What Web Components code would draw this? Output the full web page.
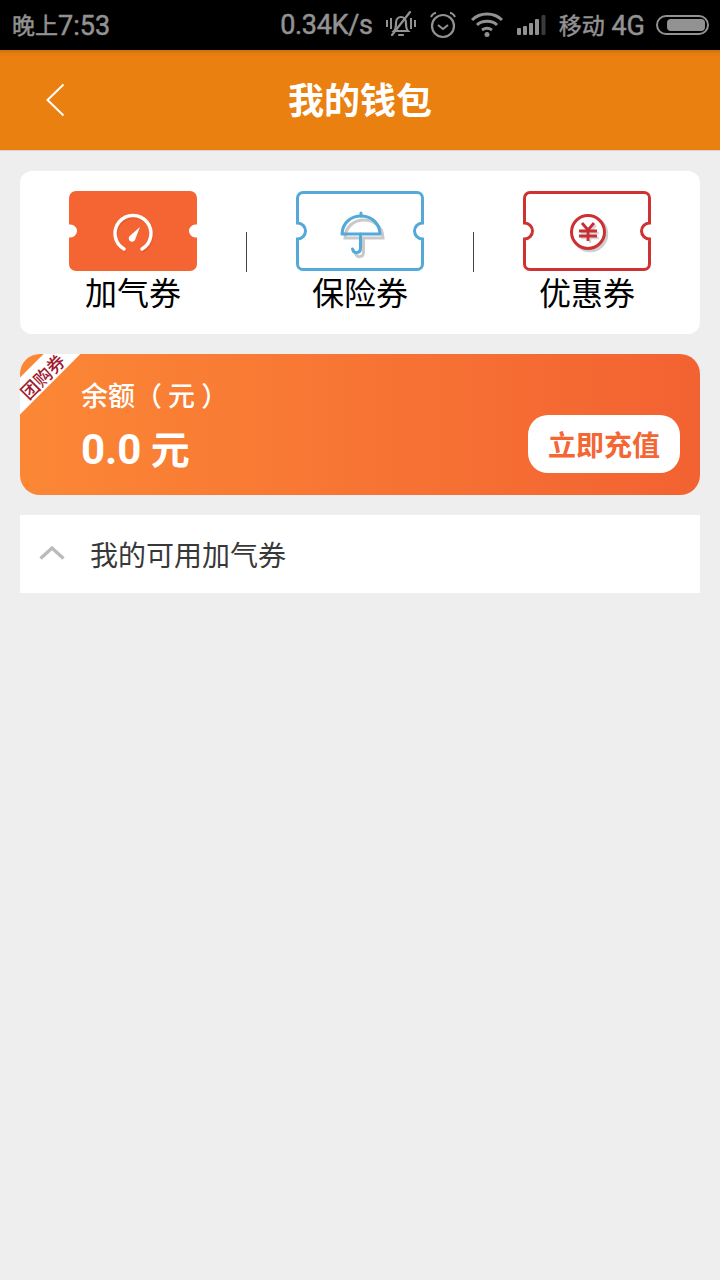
<!DOCTYPE html>
<html lang="zh-CN">
<head>
<meta charset="utf-8">
<title>我的钱包</title>
<style>
  html, body { margin: 0; padding: 0; }
  body {
    width: 720px;
    height: 1280px;
    overflow: hidden;
    background: #eeeeee;
    font-family: Roboto, "Noto Sans CJK SC", sans-serif;
  }
  wallet-page { height: 1280px; }
</style>
</head>
<body>
<wallet-page>
  <status-bar slot="top"></status-bar>
  <title-bar slot="top">我的钱包</title-bar>
  <ticket-tabs>
    <ticket-tab kind="gas">加气券</ticket-tab>
    <ticket-tab kind="insurance">保险券</ticket-tab>
    <ticket-tab kind="discount">优惠券</ticket-tab>
  </ticket-tabs>
  <balance-card>
    <span slot="ribbon">团购券</span>
    <span slot="label">余额（ 元 ）</span>
    <span slot="amount">0.0</span>
    <span slot="unit">元</span>
    <span slot="action">立即充值</span>
  </balance-card>
  <fold-row>我的可用加气券</fold-row>
</wallet-page>

<script>
class WalletPage extends HTMLElement {
  constructor() {
    super();
    const shadow = this.attachShadow({ mode: 'open' });
    shadow.innerHTML = `
      <style>
        :host { display: flex; flex-direction: column; }
        main {
          display: flex;
          flex-direction: column;
          gap: 20px;
          padding: 20px;
        }
      </style>
      <slot name="top"></slot>
      <main><slot></slot></main>
    `;
  }
}

class StatusBar extends HTMLElement {
  constructor() {
    super();
    const shadow = this.attachShadow({ mode: 'open' });
    shadow.innerHTML = `
      <style>
        :host {
          display: flex;
          align-items: center;
          height: 50px;
          padding: 0 11px 0 12px;
          box-sizing: border-box;
          background: #000;
          color: #929292;
          font: 400 27px/50px Roboto, "Noto Sans CJK SC", sans-serif;
          -webkit-text-stroke: 0.5px #929292;
        }
        .time { flex: 1; }
        .net { margin-right: 13px; letter-spacing: -0.3px; }
        .carrier { margin: 0 11px 0 13px; }
        .cjk {
          font-size: 23px;
          font-family: "Noto Sans CJK SC", sans-serif;
          position: relative;
          top: -1px;
        }
        svg { display: block; fill: none; stroke: #929292; }
      </style>
      <span class="time"><span class="cjk">晚上</span>7:53</span>
      <span class="net">0.34K/s</span>
      <svg width="30" height="28" viewBox="0 0 30 28" stroke-width="2.2" style="margin-right:14px">
        <path d="M1 9v7M5 7v11M25 7v11M29 9v7" stroke-width="2"/>
        <path d="M8 20c2-2 2-4 2-8 0-4 2.500-6 5-6s5 2 5 6c0 4 0 6 2 8z"/>
        <path d="M13 24h4M24 1 6 24" stroke-linecap="round"/>
      </svg>
      <svg width="26" height="28" viewBox="0 0 26 28" stroke-width="2.2" style="margin-right:15px">
        <circle cx="13" cy="15" r="11"/>
        <path d="M8 14l5 4 5-4" stroke-width="2"/>
        <path d="M1 6c1-2 3-4 5-4M25 6c-1-2-3-4-5-4" stroke-width="2"/>
      </svg>
      <svg width="32" height="26" viewBox="0 0 32 26" stroke-width="3" style="margin-right:14px">
        <path d="M1 8c8-8 22-8 30 0M6 13c5-5 15-5 20 0M11 18c3-2 7-2 10 0"/>
        <circle cx="16" cy="22.500" r="2.500" fill="#929292" stroke="none"/>
      </svg>
      <svg width="29" height="24" viewBox="0 0 29 24" style="stroke:none">
        <rect x="0" y="15" width="4" height="7" rx="1" fill="#929292"/>
        <rect x="6" y="13" width="4" height="9" rx="1" fill="#929292"/>
        <rect x="12" y="10" width="4" height="12" rx="1" fill="#929292"/>
        <rect x="18" y="6" width="4" height="16" rx="1" fill="#929292"/>
        <rect x="24.500" y="2" width="4" height="20" rx="1" fill="#3a3a3a"/>
      </svg>
      <span class="carrier"><span class="cjk">移动</span> 4G</span>
      <svg width="53" height="20" viewBox="0 0 53 20" stroke-width="2">
        <rect x="1" y="1" width="51" height="18" rx="9"/>
        <rect x="11" y="4" width="38" height="12" rx="4" fill="#929292" stroke="none"/>
      </svg>
    `;
  }
}

class TitleBar extends HTMLElement {
  constructor() {
    super();
    const shadow = this.attachShadow({ mode: 'open' });
    shadow.innerHTML = `
      <style>
        :host {
          display: flex;
          align-items: center;
          justify-content: center;
          position: relative;
          height: 101px;
          padding-bottom: 5px;
          box-sizing: border-box;
          background: linear-gradient(#c96e0e, #e27c10 3px, #ea8010 7px);
          border-bottom: 1px solid #d3d3d3;
          color: #fff;
          font: 700 36px "Noto Sans CJK SC", sans-serif;
        }
        svg { position: absolute; left: 46px; top: 33px; }
      </style>
      <svg width="20" height="34" viewBox="0 0 20 34" fill="none" stroke="#fff" stroke-width="2">
        <path d="M17.500 1.500 1.500 17l16 15.500"/>
      </svg>
      <slot></slot>
    `;
  }
}

class TicketTabs extends HTMLElement {
  constructor() {
    super();
    const shadow = this.attachShadow({ mode: 'open' });
    shadow.innerHTML = `
      <style>
        :host {
          display: grid;
          grid-template-columns: repeat(3, 227px);
          justify-content: center;
          height: 163px;
          box-sizing: border-box;
          background: #fff;
          border-radius: 12px;
        }
      </style>
      <slot></slot>
    `;
  }
}

const TICKET_ICONS = {
  gas: `
    <path d="M55 58a18 18 0 1 1 18 0" fill="none" stroke="#d9502a" stroke-width="3" stroke-linecap="round" transform="translate(1 2)" opacity=".5"/>
    <path d="M55 58a18 18 0 1 1 18 0" fill="none" stroke="#fff" stroke-width="3.500" stroke-linecap="round"/>
    <path d="M71 36 66.500 47.500a3.400 3.400 0 1 1-5-3.200z" fill="#fff"/>`,
  insurance: `
    <g fill="none" stroke="#c9c9c9" stroke-width="3" transform="translate(3 4)">
      <path d="M46 43C47 19 83 19 84 43z"/><path d="M64.500 43v14c0 6-7 6-8 1"/>
    </g>
    <g fill="none" stroke="#55a8da" stroke-width="3" stroke-linecap="round" stroke-linejoin="round">
      <path d="M46 43C47 19 83 19 84 43z"/><path d="M64.500 43v14c0 6-7 6-8 1"/><path d="M65 25v-3"/>
    </g>`,
  discount: `
    <circle cx="67" cy="43" r="16.500" fill="none" stroke="#cfcfcf" stroke-width="3.500"/>
    <circle cx="65" cy="41" r="16.500" fill="#fff" stroke="#cc3033" stroke-width="3"/>
    <g fill="none" stroke="#d8d8d8" stroke-width="2.500" transform="translate(2 2)">
      <path d="M59 32l6 7 6-7M56 40h18M56 45h18M65 39v11"/>
    </g>
    <g fill="none" stroke="#c62f33" stroke-width="2.800">
      <path d="M59 32l6 7 6-7M56 40h18M56 45h18M65 39v11"/>
    </g>`
};

// ticket outline with a half round bite on both short sides
const TICKET_PATH = 'M7 1.500H121a5.500 5.500 0 0 1 5.500 5.500V32a8 8 0 0 0 0 16V73a5.500 5.500 0 0 1-5.500 5.500H7A5.500 5.500 0 0 1 1.500 73V48a8 8 0 0 0 0-16V7A5.500 5.500 0 0 1 7 1.500z';

class TicketTab extends HTMLElement {
  constructor() {
    super();
    this.attachShadow({ mode: 'open' });
  }

  connectedCallback() {
    const kind = this.getAttribute('kind');
    const styles = {
      gas: 'fill="#f56433" stroke="#f56433"',
      insurance: 'fill="#fff" stroke="#55a8da"',
      discount: 'fill="#fff" stroke="#ce3232"'
    };
    this.shadowRoot.innerHTML = `
      <style>
        :host {
          display: flex;
          flex-direction: column;
          align-items: center;
          position: relative;
          padding-top: 20px;
          color: #000;
          font: 32px/40px "Noto Sans CJK SC", sans-serif;
        }
        :host(:not(:last-child))::after {
          content: '';
          position: absolute;
          right: 0;
          top: 61px;
          width: 1px;
          height: 40px;
          background: #444;
        }
        svg { display: block; }
      </style>
      <svg width="128" height="80" viewBox="0 0 128 80" stroke-width="3">
        <path d="${TICKET_PATH}" ${styles[kind]}/>
        ${TICKET_ICONS[kind]}
      </svg>
      <slot></slot>
    `;
  }
}

class BalanceCard extends HTMLElement {
  constructor() {
    super();
    const shadow = this.attachShadow({ mode: 'open' });
    shadow.innerHTML = `
      <style>
        :host {
          display: flex;
          align-items: flex-end;
          justify-content: space-between;
          position: relative;
          height: 141px;
          padding: 0 20px 22px 61px;
          box-sizing: border-box;
          border-radius: 20px;
          background: linear-gradient(90deg, #fb8735, #f36232);
          color: #fff;
        }
        .corner {
          position: absolute;
          inset: 0;
          overflow: hidden;
          border-radius: inherit;
        }
        .band {
          position: absolute;
          left: -44px;
          top: 8px;
          width: 130px;
          height: 26px;
          transform: rotate(-45deg);
          background: #fff;
        }
        .ribbon {
          position: absolute;
          left: -23px;
          top: 9px;
          width: 90px;
          transform: rotate(-45deg);
          color: #a01b2e;
          text-align: center;
          font: 500 18px/26px "Noto Sans CJK SC", sans-serif;
        }
        .info { display: flex; flex-direction: column; margin-bottom: -8px; position: relative; }
        .label { font: 500 27px/40px "Noto Sans CJK SC", sans-serif; margin-bottom: 5px; }
        .amount { font: 700 42px/60px Roboto, "Noto Sans CJK SC", sans-serif; word-spacing: -1px; }
        .amount .unit { font-size: 39px; }
        .action {
          display: flex;
          align-items: center;
          justify-content: center;
          position: relative;
          width: 152px;
          height: 58px;
          border-radius: 20px;
          background: #fff;
          color: #f46634;
          font: 700 28px "Noto Sans CJK SC", sans-serif;
        }
      </style>
      <div class="corner"><div class="band"></div></div>
      <div class="ribbon"><slot name="ribbon"></slot></div>
      <div class="info">
        <span class="label"><slot name="label"></slot></span>
        <span class="amount"><slot name="amount"></slot> <span class="unit"><slot name="unit"></slot></span></span>
      </div>
      <div class="action"><slot name="action"></slot></div>
    `;
  }
}

class FoldRow extends HTMLElement {
  constructor() {
    super();
    const shadow = this.attachShadow({ mode: 'open' });
    shadow.innerHTML = `
      <style>
        :host {
          display: flex;
          align-items: center;
          gap: 25px;
          height: 78px;
          padding-left: 19px;
          box-sizing: border-box;
          background: #fff;
          color: #383838;
          font: 28px "Noto Sans CJK SC", sans-serif;
        }
        svg { display: block; margin-top: -3px; }
      </style>
      <svg width="26" height="16" viewBox="0 0 26 16" fill="none" stroke="#bbb" stroke-width="3.500">
        <path d="M1.500 13.500 13 3l11.500 10.500"/>
      </svg>
      <slot></slot>
    `;
  }
}

customElements.define('wallet-page', WalletPage);
customElements.define('status-bar', StatusBar);
customElements.define('title-bar', TitleBar);
customElements.define('ticket-tabs', TicketTabs);
customElements.define('ticket-tab', TicketTab);
customElements.define('balance-card', BalanceCard);
customElements.define('fold-row', FoldRow);
</script>
</body>
</html>
